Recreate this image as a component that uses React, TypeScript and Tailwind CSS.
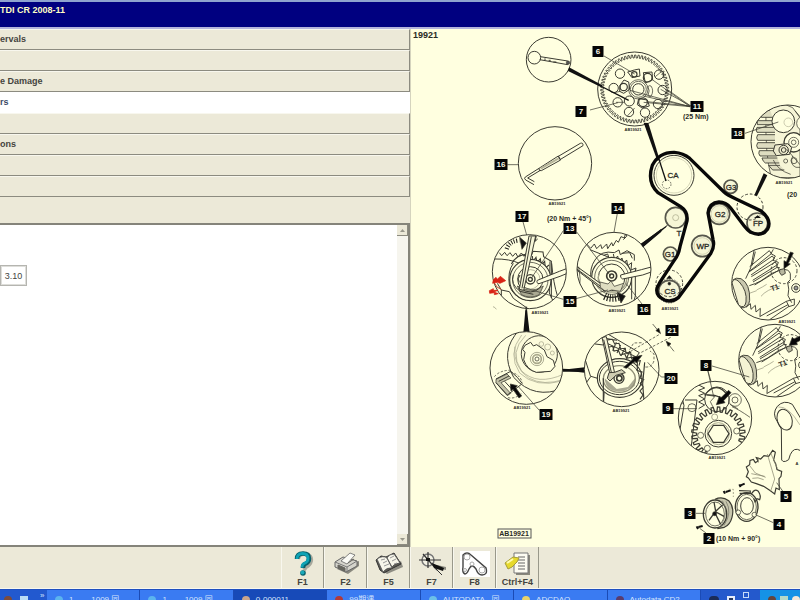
import { ReactNode } from 'react';

const INK = '#3b3b32';
const PAPER = '#ffffe0';

const menuRows = [
  { text: 'ervals', label: 'Service intervals' },
  { text: '', label: 'Row 2' },
  { text: 'e Damage', label: 'Engine damage' },
  { text: 'rs', label: 'Tensioners', active: true },
  { text: '', label: 'Row 5' },
  { text: 'ons', label: 'Instructions' },
  { text: '', label: 'Row 7' },
  { text: '', label: 'Row 8' },
];

// number tags: text, centre x, centre y
const tags: [string, number, number][] = [
  ['6', 598, 51], ['7', 581, 111], ['16', 501, 164], ['11', 697, 106],
  ['18', 738, 133], ['14', 618, 208], ['17', 522, 216], ['13', 570, 228],
  ['15', 570, 301], ['16', 644, 309], ['19', 546, 414], ['21', 672, 330],
  ['20', 671, 378], ['9', 668, 408], ['8', 706, 365], ['5', 786, 496],
  ['4', 779, 524], ['3', 690, 513], ['2', 709, 538],
];

const captions: [string, number, number][] = [
  ['AB19921', 633, 131], ['AB19921', 557, 205], ['AB19921', 540, 314],
  ['AB19921', 617, 312], ['AB19921', 522, 409], ['AB19921', 621, 412],
  ['AB19921', 670, 310], ['AB19921', 784, 184], ['AB19921', 787, 323],
  ['AB19921', 717, 459], ['A', 797, 465],
];

const torques: [string, number, number][] = [
  ['(25 Nm)', 683, 119],
  ['(20 Nm + 45°)', 547, 221],
  ['(20', 787, 197],
  ['(10 Nm + 90°)', 716, 541],
];

const pulleys: [string, number, number][] = [
  ['CA', 673, 178], ['G3', 731, 190], ['G2', 720, 217], ['FP', 758, 226],
  ['WP', 703, 249], ['G1', 670, 257], ['CS', 670, 294], ['T', 679, 236],
];

// toothed arc as a path
function teeth(cx: number, cy: number, inner: number, outer: number, n: number, from = 0, to = 360) {
  const step = (to - from) / n;
  const at = (r: number, deg: number) => {
    const a = (deg * Math.PI) / 180;
    return `${(cx + r * Math.cos(a)).toFixed(1)} ${(cy + r * Math.sin(a)).toFixed(1)}`;
  };
  let d = '';
  for (let i = 0; i < n; i++) {
    const s = from + i * step;
    d += `${i ? 'L' : 'M'}${at(inner, s)}L${at(inner, s + step * 0.35)}L${at(outer, s + step * 0.5)}L${at(outer, s + step * 0.85)}`;
  }
  return d;
}

// drawings are made at three times the size of the sheet
function Part({ x, y, children }: { x: number; y: number; children: ReactNode }) {
  return (
    <g transform={`translate(${x} ${y}) scale(0.33333)`} fill="none" stroke={INK} strokeWidth="2.2">
      {children}
    </g>
  );
}

function Inset({ id, cx, cy, r = 111, children }: { id: string; cx: number; cy: number; r?: number; children: ReactNode }) {
  return (
    <>
      <clipPath id={id}>
        <circle cx={cx} cy={cy} r={r} />
      </clipPath>
      <circle cx={cx} cy={cy} r={r} fill={PAPER} stroke="none" />
      <g clipPath={`url(#${id})`}>{children}</g>
      <circle cx={cx} cy={cy} r={r} strokeWidth="3" />
    </>
  );
}

function CamSprocket() {
  const holes = [
    [90, 101, 14], [207, 104, 14], [218, 150, 14], [204, 192, 14],
    [165, 218, 14], [117, 216, 14], [83, 187, 14], [71, 144, 14], [118, 183, 15],
  ];
  return (
    <Part x={590} y={40}>
      <circle cx="134" cy="147" r="111" fill={PAPER} strokeWidth="3" />
      <path d={teeth(134, 147, 93, 102, 62)} strokeWidth="2.6" />
      {holes.map(([x, y, r]) => (
        <circle key={`${x}-${y}`} cx={x} cy={y} r={r} strokeWidth="3" />
      ))}
      <circle cx="145" cy="148" r="29" />
      <circle cx="145" cy="148" r="24" />
      <circle cx="145" cy="148" r="17" strokeWidth="3" />
      <path d="M113 96l20-6 15-3 2 21-24 5zM160 98l26-2 2 23-22 10zM90 136l12-16 14 6 3 22-18 12-12-6zM146 176l26 4 6 18-22 6-14-10z" strokeWidth="3" />
      <g strokeWidth="3.5">
        <circle cx="173" cy="113" r="13" />
        <circle cx="101" cy="141" r="11" />
        <circle cx="159" cy="187" r="13" />
        <circle cx="133" cy="103" r="8" />
      </g>
      <path d="M183 138q10 14 0 31q-9 2-9-3q7-14 0-26q3-5 9-2zM78 187h24M112 228l22-24M71 158l20-4M196 110l18-15" />
      <path d="M42 48L134 102M300 200L184 117M300 200L161 187M300 200L120 151M300 200L160 168M0 210L84 188" />
    </Part>
  );
}

function Tools() {
  return (
    <Part x={490} y={30}>
      <circle cx="176" cy="89" r="67" fill={PAPER} strokeWidth="3" />
      <circle cx="133" cy="83" r="19" strokeWidth="3" />
      <path d="M151 80l82 13q5 5 0 11l-84-15M165 85v6M176 91h6M190 96h9" strokeWidth="3" />
      <circle cx="234" cy="98" r="5" fill="#555" />
      <circle cx="195" cy="400" r="110" fill={PAPER} strokeWidth="3" />
      <path d="M271 340q9-3 8 7l-69 42-5-10zM205 378l7 12-58 32q-8 2-7-7zM147 415l-41 26q-5 4 1 9l25 14M151 421l-38 23 20 11" strokeWidth="3" />
      <path d="M152 416l54-31" stroke="#b5b499" strokeWidth="6" />
      <path d="M52 404h33" />
    </Part>
  );
}

function ToolPointer() {
  return (
    <Part x={490} y={30}>
      <path d="M237 112l100 54-3 6-100-49z" fill="#111" stroke="none" />
      <path d="M332 168l84 43" stroke="#111" strokeWidth="4" />
    </Part>
  );
}

function Belt() {
  return (
    <Part x={640} y={90}>
      <path d="M0 463l86-61-8 10L8 471z" fill="#111" stroke="none" />
      <circle cx="102" cy="256" r="60" fill={PAPER} strokeWidth="3" />
      <circle cx="102" cy="256" r="53" stroke="#c3c3a6" strokeWidth="2" />
      <circle cx="80" cy="283" r="13" strokeDasharray="5 4" />
      <path d="M11 98l14 1 34 110-7 3z" fill="#111" stroke="none" />
      <path d="M56 205l22 68" stroke="#111" strokeWidth="4" />
      <g strokeWidth="5" stroke="#57574c" fill="#f6f6d6">
        <circle cx="107" cy="383" r="31" />
        <circle cx="91" cy="492" r="21" />
        <circle cx="88" cy="603" r="32" />
        <circle cx="187" cy="468" r="32" />
        <circle cx="238" cy="372" r="31" />
        <circle cx="352" cy="400" r="31" />
        <circle cx="272" cy="290" r="20" />
      </g>
      <g stroke="#c3c3a6" strokeWidth="2">
        <circle cx="187" cy="468" r="25" />
        <circle cx="238" cy="372" r="25" />
        <circle cx="107" cy="383" r="9" stroke="#a5a587" />
      </g>
      <circle cx="330" cy="351" r="39" strokeDasharray="8 6" strokeWidth="3" />
      <circle cx="88" cy="580" r="40" strokeDasharray="8 6" strokeWidth="3" />
      <circle cx="88" cy="603" r="36" strokeDasharray="4 4" />
      <path
        d="M149 205L252 306Q262 315 288 327L362 362Q397 390 383 417Q366 442 332 427Q322 420 312 407L272 354Q258 336 237 336Q208 338 204 369L219 448Q225 470 212 491L116 622Q96 638 74 630Q46 618 51 594L60 576L102 512Q116 495 120 470L141 393Q145 365 122 350L54 308Q20 277 37 226Q57 186 103 187Q130 189 149 205Z"
        stroke="#080808"
        strokeWidth="10"
      />
      <path d="M79 566l9-10 9 10zM342 384l11-8 10 8z" fill="#111" stroke="none" />
      <circle cx="88" cy="581" r="4" fill="#111" />
      <path d="M371 250l11 6-31 62-8-2z" fill="#111" stroke="none" />
      <Inset id="pump" cx={443} cy={155} r={110}>
        <path d="M378 58q36-30 80-5l22 30v180h-86q-20-70-16-205z" fill="#f6f5d6" />
        <path d="M390 60l-26 8v14h34M398 92h-46v12h50M405 112h-54q-5 8 0 15h54M405 134h-52q-6 10 0 17h52M405 158h-52q-6 9 0 17h54M408 182h-50q-4 9 2 16h50M412 204h-46q2 10 10 15h42M420 226h-34l12 14h35" fill="#deddc0" strokeWidth="2.600" />
        <circle cx="430" cy="94" r="34" fill={PAPER} strokeWidth="3" />
        <circle cx="445" cy="97" r="13" stroke="#bbb99d" />
        <circle cx="492" cy="100" r="22" fill={PAPER} />
        <circle cx="461" cy="157" r="29" fill={PAPER} strokeWidth="4" />
        <circle cx="461" cy="157" r="15" />
        <circle cx="461" cy="157" r="7" />
        <path d="M405 165l38-4 12 12-6 20-40 4-9-14z" fill="#eceacd" strokeWidth="3" />
        <circle cx="431" cy="180" r="14" strokeWidth="3" />
        <circle cx="431" cy="180" r="7" strokeWidth="3" />
        <circle cx="437" cy="213" r="6" />
        <circle cx="462" cy="212" r="9" />
        <path d="M440 178l42 48M458 198q-10 26 10 34h20M400 210q12 30 52 43M465 62l20 24" />
      </Inset>
      <path d="M315 130l100-34" />
      <path d="M152 48L62-2M152 48L20 35M152 48L84 0" />
    </Part>
  );
}

function Tensioners() {
  return (
    <Part x={480} y={200}>
      <Inset id="tens17" cx={148} cy={215}>
        <path d="M58 158l7 9 9-10 7 10 9-9 8 11 9-10 7 12 10-12 8 10 10-15M44 177q45-1 76 14" strokeWidth="3" />
        <path d="M80 147q8-24 38-26" stroke="#1c1c18" strokeWidth="13" strokeDasharray="3 5" />
        <path d="M119 112l20 17-13 19z" fill="#111" />
        <path d="M94 192q18-34 61-28l4-10 30 2 2 14 23 14v110M157 168l2 16 9-12 3 16 10-12 3 19 10-11 2 20 11-9" strokeWidth="3.2" />
        <path d="M100 190q-18 25-12 65q10 35 50 45M210 184l-2 95 12 26M215 190q5 60 18 100" strokeWidth="3" />
        <circle cx="151" cy="240" r="62" fill={PAPER} strokeWidth="3.5" />
        <circle cx="151" cy="240" r="53" />
        <path d="M112 258q39 25 78 0l-12 26q-27 14-54 0z" fill="#aaa992" />
        <circle cx="151" cy="238" r="38" strokeWidth="3" />
        <circle cx="151" cy="238" r="29" stroke="#a3a28a" />
        <circle cx="151" cy="238" r="14" strokeWidth="4" />
        <circle cx="151" cy="238" r="6" strokeWidth="4" />
        <path d="M147 108h20l-36 163-13-3zM154 110l-28 155" fill="#f6f6d6" strokeWidth="3" />
        <path d="M172 241l66-27 24-9v15l-22 9-63 22q-9-1-5-10z" fill={PAPER} strokeWidth="3" />
        <path d="M100 224q-10 28 20 50l40 9M120 225q-10 12-2 22M169 108l-4 16 8-7" strokeWidth="3" />
        <path d="M64 270l24 5 12 20 38 27M64 270l-12-20M64 270v32" strokeWidth="3" />
      </Inset>
      <path d="M40 239l8-7 4 6 9-9 16 13-17 8-8-3-14 3zM28 272l12-6v5h14l-12 5 13 5-12 3v-6l-14 2z" fill="#d82316" stroke="#d82316" />
      <path d="M44 250q5 14 20 18" stroke="#c64c35" strokeWidth="3" />
      <path d="M39 320q6 1 10 8" stroke="#999980" />

      <Inset id="tens14" cx={402} cy={208}>
        <path d="M320 132l12 13 11-13 7 14 12-12 4 12 14-14 3 14 12-18 4 10 10-17 6 6 8-17 10 4 4-15M330 149l62 25M433 91l7 18-10 10" strokeWidth="3" />
        <path d="M345 180q18-30 58-22l14-8 4 14 20-12 22 12v18M400 162l4 18 9-12 4 18 9-12 4 18 10-12 3 17 12-9-2 22 15-6-4 22-9 2v70M345 180q-17 24-12 60M466 208v80l-8 28" strokeWidth="3" />
        <path d="M371 166l12-4 6 18 14-4 4 14M425 160l24-2 8 17" strokeWidth="3" />
        <circle cx="395" cy="232" r="60" fill={PAPER} strokeWidth="3.5" />
        <circle cx="395" cy="232" r="51" />
        <circle cx="395" cy="232" r="40" strokeWidth="3" />
        <path d="M356 225q-7 35 26 51h27q34-13 31-48" stroke="#a3a28a" strokeWidth="4" />
        <circle cx="395" cy="228" r="15" strokeWidth="5" />
        <circle cx="395" cy="228" r="6" strokeWidth="4" />
        <path d="M290 199l89 64-5 11-84-64zM290 207l84 61" fill="#f4f3d4" strokeWidth="3" />
        <path d="M422 225l62-16 30-8v15l-26 9-60 12q-9-4-6-12z" fill={PAPER} strokeWidth="3" />
        <path d="M360 246l24 6 9-9 10 16 28-9-10 24-26-4-16 6-18-14z" fill="#deddc0" />
        <path d="M374 289q20 10 44 2" stroke="#1c1c18" strokeWidth="22" strokeDasharray="3 5" />
        <path d="M412 277l24 11-13 21z" fill="#111" />
        <path d="M296 200q8 38 2 70" />
      </Inset>
      <path d="M139 320v44" strokeWidth="5" />
      <path d="M250 92L153 236M290 96L392 228M128 62l12 43M412 40l-10 57M250 298L130 262M288 296L384 270M486 312L438 250" />
      <path d="M484 132l60-46v9l-55 47z" fill="#111" stroke="none" />
    </Part>
  );
}

function LowerInsets() {
  return (
    <Part x={480} y={315}>
      <path d="M136-14h5l8 67h-19zM248 161l66 3v6l-66 0z" fill="#111" stroke="none" />
      <path d="M268 162l46-5v16l-46-5z" fill="#111" stroke="none" />
      <Inset id="ins19" cx={139} cy={159} r={109}>
        <path d="M118 45q-61 64-17 142q62 69 150 32V50z" fill="#fcfbdb" strokeWidth="3" />
        <g stroke="#a9a88e">
          <path d="M125 60q-44 57-6 114q47 46 128 24" />
          <path d="M137 61q-51 50-13 106q47 47 128 10" />
          <path d="M104 95q-4 62 42 94q45 25 106 4" />
        </g>
        <ellipse cx="178" cy="117" rx="54" ry="55" strokeWidth="2.6" transform="rotate(-25 178 117)" />
        <path d="M152 82l-17 9-7 12 7 9-4 22q10 30 38 38l43-3 13-15-5-18-19-11-8-20-23-16-10 4z" fill={PAPER} strokeWidth="3" />
        <circle cx="171" cy="132" r="20" stroke="#8f8e76" />
        <circle cx="171" cy="132" r="13" stroke="#aaa98c" strokeWidth="5" />
        <circle cx="171" cy="132" r="6" />
        <circle cx="184" cy="87" r="7" stroke="#aaa98e" />
        <circle cx="203" cy="96" r="9" stroke="#aaa98e" />
        <circle cx="217" cy="114" r="6" stroke="#aaa98e" />
        <path d="M48 193l33-16 12 12-30 14 29 32-10 7-34-39z" fill="#c4c3a9" />
        <path d="M48 192l44-23 20 18 15 19M56 199l31-16M48 203l34 37 41-31M74 199l22 24" strokeWidth="3" />
        <path d="M43 185q18-21 53-19M91 171q28 6 36 31" strokeDasharray="7 5" />
      </Inset>
      <path d="M91 207l21 5-5 6 18 25-8 6-18-26-6 5z" fill="#080808" />
      <path d="M178 286L116 216" />
      <path d="M84 248q20 5 42-13" strokeDasharray="7 5" />

      <Inset id="ins20" cx={425} cy={163} r={112}>
        <path d="M315 132l9 28 8 25-18 25M333 184l23 7 18 12-4 75M345 87l25 3M385 58l93 55-9 13-92-43" strokeWidth="3" />
        <path d="M382 75l15-2 7 14 13-2 5 16 14-1 2 15 14-3 2 16 14-4 1 15 12-2-4 15M384 97l14-3 4 14 13-3 6 15 13-4 6 14 13-3 8 15 12-4M365 68l46 8M409 82l-11 25M422 90l-11 24M435 99l-12 24M449 108l-10 24" strokeWidth="3.2" />
        <ellipse cx="419" cy="189" rx="67" ry="58" fill={PAPER} strokeWidth="3.5" />
        <ellipse cx="418" cy="189" rx="60" ry="50" strokeWidth="3" />
        <path d="M374 190q3 46 58 38l32-15 2-25-22 28-34 6z" fill="#aaa992" stroke="none" />
        <ellipse cx="418" cy="192" rx="48" ry="40" stroke="#8f8e76" strokeWidth="4" />
        <circle cx="417" cy="190" r="15" strokeWidth="4" />
        <circle cx="418" cy="190" r="8" strokeWidth="5" />
        <path d="M366 67l13-2 25 109-14 4zM371 74l23 98" fill="#f6f5d6" strokeWidth="3" />
        <path d="M387 173l17-1 21-8 11 9-28 8-18 17-8-8z" fill="#cfcdb2" strokeWidth="3" />
        <path d="M472 140v27l14 4-6 18 11 5-10 11 9 11-10 12 9 12-9 13M494 142l-6 65 4 50M370 190v80" strokeWidth="3.5" />
      </Inset>
      <path d="M431 157l28-24-2-6 29-6-17 23-4-6-26 22z" fill="#080808" />
      <path d="M440 116l102-60M484 112l90-46M449 104l12-20 28-1M496 156q20 2 26-19v-20l-12-9" strokeDasharray="8 5" />
      <path d="M518 27l23 28M582 109l-23-29" />
      <path d="M541 55l-13-8 8-8zM559 79l5 15 9-8z" fill="#080808" />
      <path d="M558 186h-14L503 142" />
    </Part>
  );
}

function FlywheelInset({ id, cx, cy, dx, dy }: { id: string; cx: number; cy: number; dx: number; dy: number }) {
  return (
    <Inset id={id} cx={cx} cy={cy} r={109}>
      <g transform={`translate(${dx} ${dy})`} strokeWidth="2.8">
        <path d="M287 116l15-32 12-62M299 80l59-48 6 9-66 53M297 96l70-48 6 9-70 48M304 110l72-44 5 9-73 46M309 126l74-45 4 9-73 45M316 35l-10 42M370 28l-7 13 13 7-7 13 16 6-5 14 10 3" />
        <path d="M298 137q20-6 34-14l34-23 29-11q22-3 26 12v18l-8 8q6 21 1 40l11 21" />
        <path d="M298 160l22-8M333 169q16-20 57-31M320 150q20-10 30-17" stroke="#8f8e76" strokeWidth="2" />
        <path d="M250 119q28 14 32 44q4 30-10 41q24 1 27-23q2-50-26-65q-16-4-23 3z" fill="#c9c8ae" />
        <path d="M246 128q6-18 22-2q24 26 20 60q-4 22-22 10z" fill="#f4f3d4" />
        <path d="M288 202l13-11 2 17 13-12 2 20 13-11-1 24M329 230l80-46 8 15-58 40M409 184l24-7v18l-17 5M350 228l64-34" />
        <circle cx="402" cy="92" r="39" strokeDasharray="8 6" />
        <circle cx="438" cy="144" r="13" />
        <circle cx="438" cy="144" r="6" fill="#999" />
        <path d="M389 89l14-3 3 14-11 6-6-8z" fill="#b9b89f" />
      </g>
    </Inset>
  );
}

function Flywheels() {
  return (
    <Part x={650} y={240}>
      <FlywheelInset id="fly1" cx={354} cy={131} dx={0} dy={0} />
      <path d="M421 36l9 3-15 31 6 2-19 14v-24l7 4z" fill="#080808" />
      <FlywheelInset id="fly2" cx={375} cy={362} dx={21} dy={231} />
      <path d="M462 282l-30 15-5-5-9 24 24-2-2-7 24-13z" fill="#080808" />
      <path d="M186 378l112 33M173 390l18 62" />
    </Part>
  );
}

function CrankAndParts() {
  return (
    <Part x={650} y={370}>
      <Inset id="crank" cx={195} cy={144} r={110}>
        <path d="M97 85l5 22-12 72M105 90h36l-19 153M146 45l18 9-18 7 18 9-18 7 18 10-18 9 18 9-18 11M86 108l13-10" strokeWidth="3" />
        <path d={teeth(205, 191, 65, 80, 19, 120, 388)} strokeWidth="3.8" />
        <circle cx="201" cy="88" r="37" strokeWidth="3" />
        <path d="M165 74q35-43 68 2l-13 9-26-9z" fill={PAPER} strokeWidth="3.5" />
        <circle cx="205" cy="191" r="40" fill={PAPER} strokeWidth="3" />
        <circle cx="205" cy="191" r="33" stroke="#8f8e76" />
        <path d="M190 166h31l16 25-16 26h-31l-16-26z" strokeWidth="3.5" />
        <circle cx="255" cy="90" r="19" />
        <circle cx="255" cy="90" r="9" />
        <circle cx="126" cy="113" r="12" />
        <circle cx="152" cy="196" r="9" />
        <circle cx="260" cy="183" r="9" />
        <circle cx="172" cy="235" r="9" />
        <circle cx="194" cy="141" r="9" stroke="#88876f" />
        <path d="M246 110q20 8 54 32M171 75l24 4-14 16 9 18M240 103l24 14" />
      </Inset>
      <path d="M236 61l7 7-22 24 4 6-26 6 9-25 5 4z" fill="#080808" />
      <path d="M67 116h74M173 0l18 80" />
      {/* bracket */}
      <path d="M394 177l1 93q3 7 12 4l9-5q8-34 26-31l10 4V145L427 103q-25-15-45 6q-17 22 0 46q4 9 12 22z" strokeWidth="3" />
      <ellipse cx="404" cy="149" rx="22" ry="32" transform="rotate(-18 404 149)" strokeWidth="3" />
      <path d="M385 111q30-4 65 54" stroke="#a3a28a" />
      {/* cover */}
      <path d="M319 263l13 4 10-10 14 2 12-18 8 6-5 23 6 11 4 18 14 5-2 15-6 7 1 33-10-5-4 18-15-11-18-12-22-8-15-5-9-12-6-4 6-15-6-14 10-7 1-13 10-3 6 10 8-5z" strokeWidth="3.5" />
      <path d="M352 252l22 75-13 39M362 249l20 46M304 311l40 8M300 288l16 21 31 13M307 325q17-5 34 4M326 262l-1 16" stroke="#88876f" />
      {/* ring */}
      <ellipse cx="290" cy="411" rx="34" ry="43" strokeWidth="4" />
      <ellipse cx="290" cy="411" rx="29" ry="38" />
      <ellipse cx="291" cy="408" rx="19" ry="25" strokeWidth="3" />
      <circle cx="265" cy="427" r="7" fill={PAPER} />
      <circle cx="313" cy="434" r="7" fill={PAPER} />
      <path d="M267 362l34 1-1 9M269 370h37M306 370q7-15 19-6q9 13 4 25l-8-3-6 10-4-11" strokeWidth="3.5" />
      {/* pulley */}
      <path d="M195 388q22-10 41 4q18 20 10 50q-6 23-23 30l-21 4" fill="#c9c8ae" strokeWidth="3.5" />
      <ellipse cx="195" cy="432" rx="35" ry="42" fill={PAPER} strokeWidth="4" />
      <ellipse cx="195" cy="432" rx="28" ry="36" />
      <path d="M217 392q22 32-5 77M228 394q20 33-6 72" stroke="#77766a" />
      <path d="M192 396l5 28 21-20M198 426l24 13M190 433l-13 18M198 435l14 28" strokeWidth="4" />
      <circle cx="194" cy="431" r="6" fill="#111" />
      {/* bolts */}
      <path d="M221 363l4 8M227 366l15-5M268 343l4 8M272 346l12-5M140 469l4 8M145 471l13-3" stroke="#111" strokeWidth="6" />
      <path d="M236 358h14v23" strokeDasharray="6 5" stroke="#88876f" />
      <path d="M138 430h27M370 458L316 434M400 366l-20-28M168 489l-19-14" />
    </Part>
  );
}

function Diagram() {
  return (
    <svg
      viewBox="411 29 389 518"
      preserveAspectRatio="xMinYMin meet"
      className="block h-full w-full"
      role="img"
      aria-label="Timing belt diagram"
    >
      <Tools />
      <CamSprocket />
      <ToolPointer />
      <Belt />
      <Tensioners />
      <LowerInsets />
      <Flywheels />
      <CrankAndParts />
      <g fontFamily="Liberation Sans, Arial, sans-serif" fontWeight="700" fill="#2a2a24">
        <g fontSize="8" textAnchor="middle" fontWeight="400" stroke="#2a2a24" strokeWidth="0.3">
          {pulleys.map(([t, x, y]) => (
            <text key={t} x={x} y={y}>{t}</text>
          ))}
          <text x="775" y="290" fontSize="7" transform="rotate(-20 775 288)">T1</text>
          <text x="783" y="366" fontSize="7" transform="rotate(-20 783 364)">T1</text>
        </g>
        <g fontSize="4" textAnchor="middle">
          {captions.map(([t, x, y]) => (
            <text key={`${x}-${y}`} x={x} y={y}>{t}</text>
          ))}
        </g>
        <g fontSize="7">
          {torques.map(([t, x, y]) => (
            <text key={t} x={x} y={y}>{t}</text>
          ))}
          <rect x="498" y="529" width="33" height="9" fill="none" stroke="#555" />
          <text x="514" y="536" textAnchor="middle">AB19921</text>
        </g>
        <text x="413" y="38" fontSize="9">19921</text>
        <g fontSize="8" textAnchor="middle">
          {tags.map(([t, x, y]) => {
            const w = t.length > 1 ? 13 : 11;
            return (
              <g key={`${t}-${x}`}>
                <rect x={x - w / 2} y={y - 5} width={w} height="11" fill="#050505" />
                <text x={x} y={y + 3} fill="#f7f7e6">{t}</text>
              </g>
            );
          })}
        </g>
      </g>
    </svg>
  );
}

function HelpIcon() {
  return (
    <svg viewBox="0 0 30 26" className="h-[26px] w-[30px]">
      <path d="M10 8q1-6 7-5q7 1 6 7q-1 4-5 6l-2 3" fill="none" stroke="#a9a89c" strokeWidth="4" />
      <path d="M9 8q0-5.500 6-5.500t6 5q0 4-4 5.500q-2 1-2 4" fill="none" stroke="#07616c" strokeWidth="4.500" />
      <path d="M9 8q0-5.500 5.500-5.500t5.500 5q0 3.500-4 5q-2 1-2 4" fill="none" stroke="#0fa3b5" strokeWidth="2.800" />
      <circle cx="15" cy="22" r="2.800" fill="#07616c" />
      <circle cx="14.500" cy="21.500" r="2" fill="#18a9ba" />
    </svg>
  );
}

function PrintIcon() {
  return (
    <svg viewBox="0 0 30 26" className="h-[26px] w-[30px]">
      <path d="M6 18l11 5 11-8v-5z" fill="#8a897f" />
      <path d="M4 11l8-5 14 4v5l-11 6-11-5z" fill="#d5d4cc" stroke="#666" />
      <path d="M4 11l12 5 10-6M16 16v5" fill="none" stroke="#777" />
      <path d="M10 10l9-8 5 2-8 9z" fill="#fafaf5" stroke="#666" strokeWidth="0.8" />
      <path d="M7 14l7 3v3l-7-3zM17 12l6-4" fill="#66655e" stroke="#66655e" />
    </svg>
  );
}

function BookIcon() {
  return (
    <svg viewBox="0 0 30 26" className="h-[26px] w-[30px]">
      <path d="M9 20l4 3 16-7-2-6z" fill="#8d8c82" />
      <path d="M2 9l5-4 5 1 8-4 7 11-10 5-7 4-4-3z" fill="#5c5b54" stroke="#333" />
      <path d="M3 8q6-4 10-1l5 10q-5-1-9 4zM13 7q2-4 7-4l6 9q-6 0-8 4z" fill="#f7f6ea" stroke="#555" strokeWidth="0.8" />
      <path d="M7 9l4-1M9 12l4-2M10 15l5-2M16 7l4-2M18 10l4-2M20 13l3-1" stroke="#999" />
    </svg>
  );
}

function ZoomIcon() {
  return (
    <svg viewBox="0 0 30 26" className="h-[26px] w-[30px]">
      <path d="M20 14l9 2v3l-8-2z" fill="#8a897f" />
      <circle cx="11" cy="9" r="6" fill="#f3f1e4" stroke="#777" strokeWidth="1.500" />
      <path d="M11 1v16M2 9h22M6 3l14 16" stroke="#333" strokeWidth="1.200" />
      <path d="M15 12l12 5-1 3-9-3z" fill="#111" />
      <path d="M18 17l7 7" stroke="#333" />
      <path d="M9 7h4v3H9z" fill="#111" />
    </svg>
  );
}

function BeltIcon() {
  return (
    <svg viewBox="0 0 30 26" className="h-[26px] w-[30px] bg-white">
      <path d="M3 4q4-4 8 0l15 13q2 7-4 7-4 0-6-6-4-6-7 0-2 5-4 5-3-1-2-7Q3 9 3 4z" fill="none" stroke="#444" strokeWidth="1.400" />
      <g fill="none" stroke="#aaa">
        <circle cx="7" cy="6" r="3" />
        <circle cx="5" cy="19" r="1.500" />
        <circle cx="12" cy="13" r="2" />
        <circle cx="22" cy="19" r="3" />
      </g>
    </svg>
  );
}

function ExitIcon() {
  return (
    <svg viewBox="0 0 30 26" className="h-[26px] w-[30px]">
      <path d="M13 4h14v20H13z" fill="#88877c" />
      <path d="M11 2h14v20H11z" fill="#fdfcf2" stroke="#777" />
      <path d="M15 6h7M15 9h7M15 12h7M15 15h7M15 18h7" stroke="#666" />
      <path d="M2 12l8-6 6 1-2 4-5 5-4 2z" fill="#e6d92c" stroke="#a49c3c" />
      <path d="M4 12l6-4" stroke="#fffbb0" strokeWidth="2" />
    </svg>
  );
}

const tools = [
  { key: 'F1', icon: <HelpIcon /> },
  { key: 'F2', icon: <PrintIcon /> },
  { key: 'F5', icon: <BookIcon /> },
  { key: 'F7', icon: <ZoomIcon /> },
  { key: 'F8', icon: <BeltIcon /> },
  { key: 'Ctrl+F4', icon: <ExitIcon /> },
];

const tasks = [
  { title: '1........1009 同', dot: 'bg-[#5bb4ee]' },
  { title: '1........1009 同', dot: 'bg-[#5bb4ee]' },
  { title: '0-000011', dot: 'bg-[#c9a58c]', active: true },
  { title: '99期课', dot: 'bg-[#b23a3a]' },
  { title: 'AUTODATA - 同', dot: 'bg-[#6cc0e8]' },
  { title: 'ADCDAO', dot: 'bg-[#e8d36a]' },
  { title: 'Autodata CD2', dot: 'bg-[#5a3c6e]' },
];

function Taskbar() {
  return (
    <footer className="flex h-[11px] shrink-0 overflow-hidden border-t border-[#1e4fc0] bg-[#2f6fe6] text-[8px] text-[#d5e4fc]">
      <div className="flex w-[47px] shrink-0 items-start gap-2 bg-[#2259cf] pt-1.5 pl-1">
        <span className="h-2 w-2 rounded-full bg-[#7d4b3c]" />
        <span className="h-2 w-2 bg-[#b9dcf5]" />
        <span className="-mt-1 ml-1 leading-none">»</span>
      </div>
      {tasks.map((t, i) => (
        <button
          key={i}
          className={`flex min-w-0 flex-1 items-start gap-1.5 overflow-hidden border-r border-[#1b4bb5] pt-1.5 pl-2 text-left leading-none whitespace-nowrap ${
            t.active ? 'bg-[#174ab8]' : 'bg-[#3a7bf2]'
          }`}
        >
          <span className={`h-2 w-2 shrink-0 rounded-full ${t.dot}`} />
          {t.title}
        </button>
      ))}
      <div className="flex w-[59px] shrink-0 items-start gap-2 bg-[#2459cc] pt-1.5 pl-2">
        <span className="h-2 w-2.5 rounded-t bg-[#1b2c58]" />
        <span className="h-2 w-2 border-2 border-[#e6ecfa] bg-[#26375f]" />
        <span className="-mt-1 h-1.5 w-1.5 border border-[#c7dbfa]" />
      </div>
      <div className="flex w-10 shrink-0 items-start gap-1 bg-[#1592e6] pt-1.5 pl-2">
        <span className="h-2 w-2 rounded-full bg-[#63453c]" />
        <span className="h-2 w-2 bg-[#b4d9c8]" />
        <span className="h-2 w-2 rounded-full bg-[#f4e9da]" />
      </div>
    </footer>
  );
}

export default function App() {
  return (
    <div className="flex h-screen flex-col overflow-hidden bg-[#ece9d8] font-['Liberation_Sans',Arial,'Noto_Sans_CJK_SC',sans-serif]">
      <header className="h-[29px] shrink-0 border-t-2 border-b-2 border-t-[#8ea3cf] border-b-[#b4b4dc] bg-[#000080]">
        <h1 className="pt-0.5 text-[9px] leading-[12px] font-bold text-[#ffffc4]">TDI CR 2008-11</h1>
      </header>

      <main className="grid min-h-0 flex-1 grid-cols-[411fr_389fr]">
        <section className="flex min-h-0 flex-col border-r border-[#d5d4be]">
          <nav>
            {menuRows.map((row) => (
              <button
                key={row.label}
                aria-label={row.label}
                className={`flex h-[21px] w-full items-center text-[9px] font-bold ${
                  row.active
                    ? 'bg-white text-[#3c4a66]'
                    : 'border-t border-r border-b border-t-[#f8f7ee] border-r-[#8c8b80] border-b-[#8c8b80] bg-[#ece9d8] text-[#44443e]'
                }`}
              >
                {row.text}
              </button>
            ))}
          </nav>
          <div className="h-[26px] shrink-0" />
          <div className="flex min-h-0 flex-1 border-t-2 border-r-2 border-b-2 border-[#85847a] bg-white">
            <div className="flex-1 pt-10">
              <label className="sr-only" htmlFor="engine-value">Value</label>
              <input
                id="engine-value"
                defaultValue="3.10"
                className="block h-[21px] w-[27px] border border-[#b5b5b0] bg-white text-center text-[9px] text-[#44443e] ring-1 ring-[#dededa] ring-inset"
              />
            </div>
            <div className="flex w-[11px] flex-col bg-[#f6f5ee]">
              <button aria-label="Scroll up" className="flex h-[11px] items-center justify-center border-r border-b border-[#8c8b80] bg-[#ece9d8]">
                <svg viewBox="0 0 5 3" className="h-[3px] w-[5px]"><path d="M0 3L2.500 0L5 3z" fill="#99988c" /></svg>
              </button>
              <div className="flex-1" />
              <button aria-label="Scroll down" className="flex h-[11px] items-center justify-center border-r border-b border-[#8c8b80] bg-[#ece9d8]">
                <svg viewBox="0 0 5 3" className="h-[3px] w-[5px]"><path d="M0 0L2.500 3L5 0z" fill="#99988c" /></svg>
              </button>
            </div>
          </div>
        </section>

        <section className="min-h-0 overflow-hidden bg-[#ffffe0]">
          <Diagram />
        </section>
      </main>

      <div className="flex h-[42px] shrink-0 justify-center border-b border-[#f8f7ee] pl-5">
        {tools.map((tool) => (
          <button
            key={tool.key}
            className="flex w-[43px] flex-col items-center border-r border-l border-r-[#99988a] border-l-[#f8f7ee] pt-1 text-[9px] leading-[11px] font-bold text-[#44443e]"
          >
            {tool.icon}
            {tool.key}
          </button>
        ))}
      </div>

      <Taskbar />
    </div>
  );
}
